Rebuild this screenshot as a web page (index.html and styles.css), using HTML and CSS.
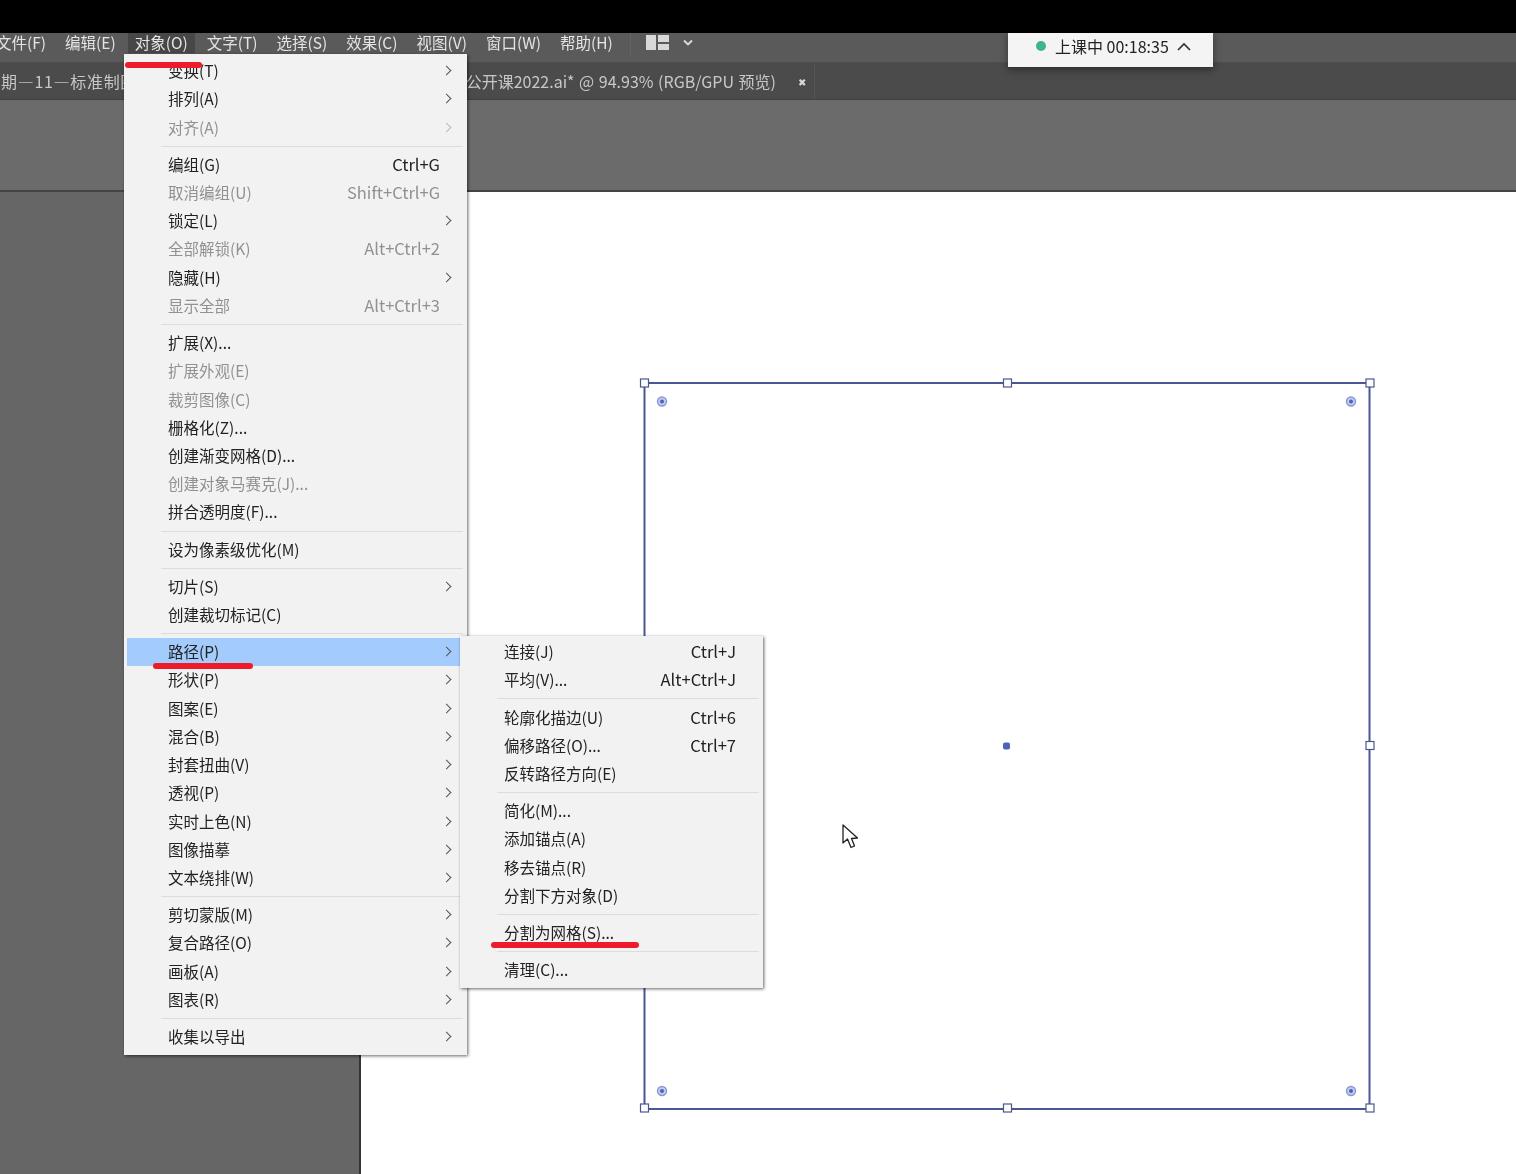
FILE: index.html
```html
<!DOCTYPE html>
<html lang="zh-CN">

<head>
    <meta charset="UTF-8">
    <title>对象菜单</title>
    <link rel="stylesheet" href="styles.css">
</head>

<body>
    <div class="app">
        <div class="blackBar"></div>

        <div class="menuBar">
            <span class="menuName">文件(F)</span>
            <span class="menuName">编辑(E)</span>
            <span class="menuName active">对象(O)</span>
            <span class="menuName">文字(T)</span>
            <span class="menuName">选择(S)</span>
            <span class="menuName">效果(C)</span>
            <span class="menuName">视图(V)</span>
            <span class="menuName">窗口(W)</span>
            <span class="menuName">帮助(H)</span>
            <span class="barDivider"></span>
            <svg class="layoutIcon" width="23" height="15" viewBox="0 0 23 15">
                <rect x="0" y="0" width="10" height="15" fill="#d8d8d8"/>
                <rect x="12" y="0" width="11" height="7" fill="#d8d8d8"/>
                <rect x="12" y="9" width="11" height="6" fill="#d8d8d8"/>
            </svg>
            <svg class="layoutCaret" width="10" height="7" viewBox="0 0 10 7">
                <path d="M1 1.5 L5 5.5 L9 1.5" fill="none" stroke="#dcdcdc" stroke-width="1.8"/>
            </svg>
        </div>

        <div class="tabBar">
            <div class="tab firstTab"><span class="tabTitle">期—11—标准制图</span></div>
            <div class="tab secondTab">
                <span class="tabTitle">公开课2022.ai* @ 94.93% (RGB/GPU 预览)</span>
                <span class="tabClose">✖</span>
            </div>
        </div>

        <div class="toolStrip"></div>

        <div class="workArea">
            <div class="sidePanel"></div>
            <div class="canvas"></div>
        </div>
    </div>

    <!-- 选中的矩形 -->
    <svg class="selection" width="746" height="746" viewBox="634 373 746 746">
        <rect x="644.5" y="383" width="725" height="726" fill="none" stroke="#4b5793" stroke-width="2"/>
        <g fill="#fff" stroke="#4b5793" stroke-width="1.2">
            <rect x="640.5" y="379" width="8" height="8"/>
            <rect x="1003.5" y="379" width="8" height="8"/>
            <rect x="1366" y="379" width="8" height="8"/>
            <rect x="1366" y="741.5" width="8" height="8"/>
            <rect x="640.5" y="1104" width="8" height="8"/>
            <rect x="1003.5" y="1104" width="8" height="8"/>
            <rect x="1366" y="1104" width="8" height="8"/>
        </g>
        <g fill="#c3cbee" stroke="#8a97d4" stroke-width="1.4">
            <circle cx="662" cy="401.500" r="4.500"/>
            <circle cx="1351" cy="401.500" r="4.500"/>
            <circle cx="662" cy="1091" r="4.500"/>
            <circle cx="1351" cy="1091" r="4.500"/>
        </g>
        <g fill="#4b63b8">
            <circle cx="662" cy="401.500" r="2"/>
            <circle cx="1351" cy="401.500" r="2"/>
            <circle cx="662" cy="1091" r="2"/>
            <circle cx="1351" cy="1091" r="2"/>
            <rect x="1003" y="742.500" width="7" height="7" rx="2"/>
        </g>
    </svg>

    <svg class="cursor" width="18" height="26" viewBox="0 0 18 26">
        <path d="M1 1 L1 19 L5.500 15 L9 23.500 L12.500 22 L9.500 14.500 L15.500 14 Z" fill="#fff" stroke="#222" stroke-width="1.300" stroke-linejoin="round"/>
    </svg>

    <div class="classPill">
        <span class="classDot"></span>
        <span class="classText">上课中 00:18:35</span>
        <svg width="14" height="9" viewBox="0 0 14 9">
            <path d="M1 8 L7 2 L13 8" fill="none" stroke="#333" stroke-width="1.700"/>
        </svg>
    </div>

    <div class="dropMenu objectMenu">
        <div class="row"><span>变换(T)</span><i class="arrow"></i></div>
        <div class="row"><span>排列(A)</span><i class="arrow"></i></div>
        <div class="row off"><span>对齐(A)</span><i class="arrow"></i></div>
        <div class="sep"></div>
        <div class="row"><span>编组(G)</span><b>Ctrl+G</b></div>
        <div class="row off"><span>取消编组(U)</span><b>Shift+Ctrl+G</b></div>
        <div class="row"><span>锁定(L)</span><i class="arrow"></i></div>
        <div class="row off"><span>全部解锁(K)</span><b>Alt+Ctrl+2</b></div>
        <div class="row"><span>隐藏(H)</span><i class="arrow"></i></div>
        <div class="row off"><span>显示全部</span><b>Alt+Ctrl+3</b></div>
        <div class="sep"></div>
        <div class="row"><span>扩展(X)...</span></div>
        <div class="row off"><span>扩展外观(E)</span></div>
        <div class="row off"><span>裁剪图像(C)</span></div>
        <div class="row"><span>栅格化(Z)...</span></div>
        <div class="row"><span>创建渐变网格(D)...</span></div>
        <div class="row off"><span>创建对象马赛克(J)...</span></div>
        <div class="row"><span>拼合透明度(F)...</span></div>
        <div class="sep"></div>
        <div class="row"><span>设为像素级优化(M)</span></div>
        <div class="sep"></div>
        <div class="row"><span>切片(S)</span><i class="arrow"></i></div>
        <div class="row"><span>创建裁切标记(C)</span></div>
        <div class="sep"></div>
        <div class="row current"><span>路径(P)</span><i class="arrow"></i></div>
        <div class="row"><span>形状(P)</span><i class="arrow"></i></div>
        <div class="row"><span>图案(E)</span><i class="arrow"></i></div>
        <div class="row"><span>混合(B)</span><i class="arrow"></i></div>
        <div class="row"><span>封套扭曲(V)</span><i class="arrow"></i></div>
        <div class="row"><span>透视(P)</span><i class="arrow"></i></div>
        <div class="row"><span>实时上色(N)</span><i class="arrow"></i></div>
        <div class="row"><span>图像描摹</span><i class="arrow"></i></div>
        <div class="row"><span>文本绕排(W)</span><i class="arrow"></i></div>
        <div class="sep"></div>
        <div class="row"><span>剪切蒙版(M)</span><i class="arrow"></i></div>
        <div class="row"><span>复合路径(O)</span><i class="arrow"></i></div>
        <div class="row"><span>画板(A)</span><i class="arrow"></i></div>
        <div class="row"><span>图表(R)</span><i class="arrow"></i></div>
        <div class="sep"></div>
        <div class="row"><span>收集以导出</span><i class="arrow"></i></div>
    </div>

    <div class="dropMenu pathMenu">
        <div class="row"><span>连接(J)</span><b>Ctrl+J</b></div>
        <div class="row"><span>平均(V)...</span><b>Alt+Ctrl+J</b></div>
        <div class="sep"></div>
        <div class="row"><span>轮廓化描边(U)</span><b>Ctrl+6</b></div>
        <div class="row"><span>偏移路径(O)...</span><b>Ctrl+7</b></div>
        <div class="row"><span>反转路径方向(E)</span></div>
        <div class="sep"></div>
        <div class="row"><span>简化(M)...</span></div>
        <div class="row"><span>添加锚点(A)</span></div>
        <div class="row"><span>移去锚点(R)</span></div>
        <div class="row"><span>分割下方对象(D)</span></div>
        <div class="sep"></div>
        <div class="row"><span>分割为网格(S)...</span></div>
        <div class="sep"></div>
        <div class="row"><span>清理(C)...</span></div>
    </div>

    <!-- 红色标注线 -->
    <div class="redMark markObject"></div>
    <div class="redMark markPath"></div>
    <div class="redMark markGrid"></div>
</body>

</html>
```

FILE: styles.css
```css
* {
    box-sizing: border-box;
}

body {
    margin: 0;
    width: 1516px;
    height: 1174px;
    overflow: hidden;
    position: relative;
    background-color: #fff;
    font-family: "Noto Sans CJK SC", "Liberation Sans", sans-serif;
    font-size: 15.5px;
    filter: blur(0.4px);
}

.app {
    display: flex;
    flex-direction: column;
    height: 1174px;
}

.blackBar {
    height: 33px;
    background-color: #000;
}

.menuBar {
    height: 30px;
    display: flex;
    align-items: flex-start;
    gap: 19px;
    background-color: #5a5a5a;
    border-bottom: 1px solid #4e4e4e;
    color: #e4e4e4;
}

.menuName {
    height: 20px;
    line-height: 18px;
    white-space: nowrap;
}

.menuName:first-child {
    margin-left: -4px;
}

.menuName.active {
    margin: 0 -7px;
    padding: 0 7px;
    background-color: #474747;
}

.barDivider {
    width: 1px;
    height: 24px;
    background-color: #636363;
    margin-left: -2px;
}

.layoutIcon {
    margin: 2px 0 0 -4px;
}

.layoutCaret {
    margin: 6px 0 0 -5px;
}

.tabBar {
    height: 37px;
    display: flex;
    background-color: #4b4b4b;
    border-bottom: 1px solid #3f3f3f;
    color: #c8c8c8;
    font-size: 16px;
}

.tab {
    display: flex;
    align-items: center;
    white-space: nowrap;
    overflow: hidden;
}

.firstTab {
    width: 300px;
    margin-left: 1px;
    letter-spacing: 0.7px;
}

.secondTab {
    width: 514px;
    justify-content: flex-end;
    padding-right: 8px;
    border-right: 1px solid #555;
}

.tabTitle {
    word-spacing: 1px;
}

.tabClose {
    margin-left: 22px;
    font-size: 10px;
    color: #d8d8d8;
}

.toolStrip {
    height: 92px;
    background-color: #6b6b6b;
    border-bottom: 2px solid #444;
}

.workArea {
    flex: 1;
    display: flex;
}

.sidePanel {
    width: 361px;
    background-color: #666;
    border-right: 2px solid #333;
}

.canvas {
    flex: 1;
    background-color: #fff;
}

.selection {
    position: absolute;
    left: 634px;
    top: 373px;
}

.cursor {
    position: absolute;
    left: 842px;
    top: 824px;
}

.classPill {
    position: absolute;
    left: 1008px;
    top: 33px;
    width: 205px;
    height: 35px;
    padding: 0 0 8px 28px;
    display: flex;
    align-items: center;
    background-color: #f4f4f4;
    border-bottom: 1px solid #333;
    box-shadow: 0 2px 8px rgba(0, 0, 0, 0.4);
    color: #222;
    font-size: 16px;
}

.classDot {
    width: 10px;
    height: 10px;
    border-radius: 50%;
    background-color: #3fb58c;
}

.classText {
    margin-left: 9px;
    margin-right: 8px;
    white-space: nowrap;
}

.dropMenu {
    position: absolute;
    background-color: #f2f2f2;
    box-shadow: 1px 1px 3px rgba(0, 0, 0, 0.6);
    color: #222;
}

.objectMenu {
    left: 124px;
    top: 54px;
    width: 343px;
    padding: 3px 3px 4px;
}

.pathMenu {
    left: 460px;
    top: 636px;
    width: 303px;
    padding: 2px 3px 4px;
}

.row {
    height: 28.23px;
    display: flex;
    align-items: center;
    justify-content: space-between;
    white-space: nowrap;
}

.objectMenu .row {
    padding: 0 11px 2px 41px;
}

.pathMenu .row {
    padding: 0 24px 2px 41px;
}

.row b {
    font-weight: 400;
    font-size: 16.5px;
}

.objectMenu .row b {
    margin-right: 13px;
}

.row.off {
    color: #919191;
}

.row.current {
    background-color: #a3cbfb;
}

.arrow {
    width: 7px;
    height: 7px;
    margin: 1px 3px 0 0;
    border-top: 1.5px solid #555;
    border-right: 1.5px solid #555;
    transform: rotate(45deg);
}

.row.off .arrow {
    border-color: #bbb;
}

.sep {
    height: 9px;
    padding: 4px 0;
    margin-left: 34px;
    margin-right: 1px;
}

.sep::before {
    content: "";
    display: block;
    height: 1px;
    background-color: #dcdcdc;
}

.redMark {
    position: absolute;
    height: 6px;
    border-radius: 3px;
    background-color: #ee1c2b;
}

.markObject {
    left: 125px;
    top: 62px;
    width: 77px;
}

.markPath {
    left: 153px;
    top: 663px;
    width: 100px;
}

.markGrid {
    left: 491px;
    top: 942px;
    width: 148px;
}
```
